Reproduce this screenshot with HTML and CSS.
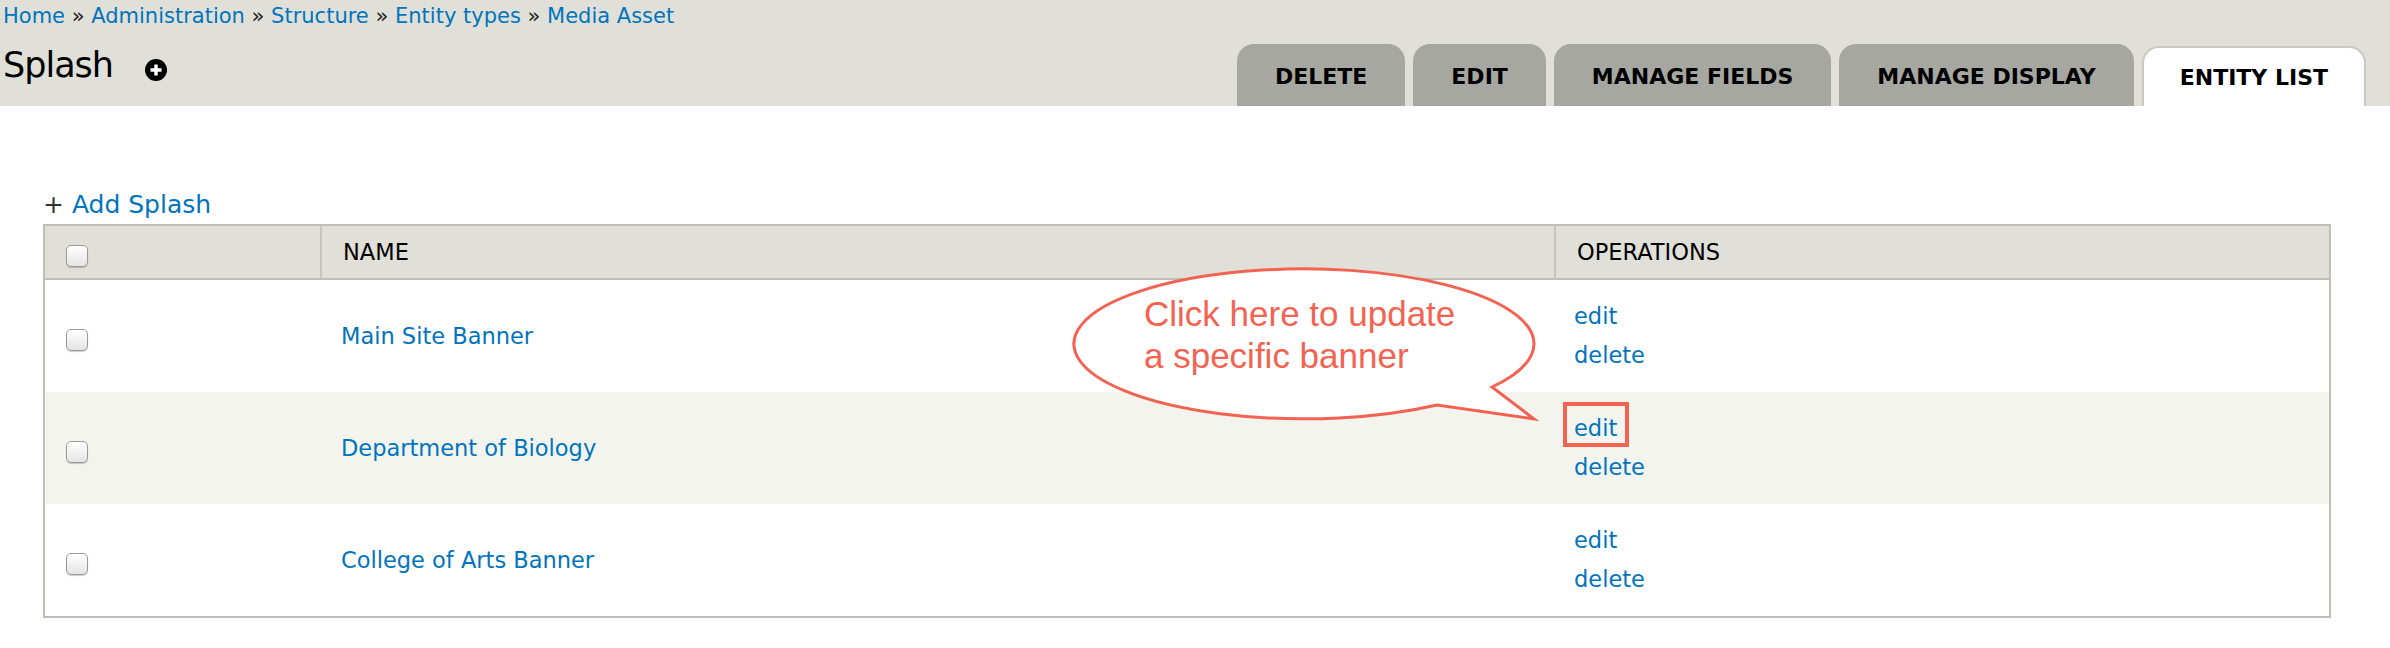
FILE: index.html
```html
<!DOCTYPE html>
<html lang="en">
<head>
<meta charset="utf-8">
<title>Splash</title>
<link rel="stylesheet" href="styles.css">
</head>
<body>
<header class="top">
  <div class="titles">
    <nav class="crumbs"><a href="#">Home</a> » <a href="#">Administration</a> » <a href="#">Structure</a> » <a href="#">Entity types</a> » <a href="#">Media Asset</a></nav>
    <h1 class="page-title"><span>Splash</span><svg class="add-icon" width="22" height="22" viewBox="0 0 22 22"><circle cx="11" cy="11" r="11" fill="#000"/><path d="M11 5.5v11M5.5 11h11" stroke="#fff" stroke-width="3.4"/></svg></h1>
  </div>
  <ul class="tabs">
    <li class="tab">DELETE</li>
    <li class="tab">EDIT</li>
    <li class="tab">MANAGE FIELDS</li>
    <li class="tab">MANAGE DISPLAY</li>
    <li class="tab active">ENTITY LIST</li>
  </ul>
</header>
<main class="content">
  <p class="action"><span class="plus">+</span> <a href="#">Add Splash</a></p>
  <table class="list">
    <colgroup><col class="c-check"><col class="c-name"><col class="c-ops"></colgroup>
    <thead>
      <tr><th><input type="checkbox" class="cb"></th><th>NAME</th><th>OPERATIONS</th></tr>
    </thead>
    <tbody>
      <tr><td><input type="checkbox" class="cb"></td><td><a href="#">Main Site Banner</a></td><td class="ops"><a href="#">edit</a><br><a href="#">delete</a></td></tr>
      <tr class="even"><td><input type="checkbox" class="cb"></td><td><a href="#">Department of Biology</a></td><td class="ops"><span class="hl"><a href="#">edit</a></span><br><a href="#">delete</a></td></tr>
      <tr><td><input type="checkbox" class="cb"></td><td><a href="#">College of Arts Banner</a></td><td class="ops"><a href="#">edit</a><br><a href="#">delete</a></td></tr>
    </tbody>
  </table>
</main>
<div class="callout">
  <svg class="bubble" width="470" height="160" viewBox="0 0 470 160"><path d="M422 123 A230 75 0 1 0 367 141 L464 155 Z" fill="#fff" stroke="#f26352" stroke-width="3" stroke-linejoin="miter"/></svg>
  <div class="callout-text">Click here to update<br>a specific banner</div>
</div>
</body>
</html>
```
FILE: styles.css
```css
html, body {
  margin: 0;
  padding: 0;
  background: #fff;
}
body {
  position: relative;
  font-family: "DejaVu Sans", "Liberation Sans", sans-serif;
  font-size: 22.5px;
  color: #000;
}
a {
  color: #0074bd;
  text-decoration: none;
}
.top {
  display: flex;
  justify-content: space-between;
  align-items: flex-end;
  height: 106px;
  padding-right: 24px;
  background: #e0e0d8;
}
.titles {
  align-self: flex-start;
  padding: 2px 0 0 3px;
}
.crumbs {
  font-size: 21px;
  line-height: 28px;
  color: #222;
  white-space: nowrap;
}
.page-title {
  display: flex;
  align-items: center;
  gap: 32px;
  margin: 15px 0 0;
  font-size: 35px;
  line-height: 40px;
  font-weight: normal;
  letter-spacing: -1px;
}
.add-icon {
  margin-top: 10px;
}
.tabs {
  display: flex;
  align-items: flex-end;
  gap: 8px;
  margin: 0;
  padding: 0;
  list-style: none;
}
.tab {
  box-sizing: border-box;
  height: 62px;
  padding: 4px 38px 0;
  line-height: 58px;
  font-size: 22px;
  font-weight: bold;
  background: #a6a7a1;
  border-radius: 17px 17px 0 0;
  white-space: nowrap;
}
.tab.active {
  height: 60px;
  padding: 2px 36px 0;
  line-height: 56px;
  background: #fff;
  border: 2px solid #c9c9c3;
  border-bottom: 0;
}
.content {
  padding: 0 59px 0 43px;
}
.action {
  margin: 84px 0 4px;
  font-size: 25px;
  line-height: 30px;
}
.plus {
  color: #333;
}
.list {
  width: 100%;
  table-layout: fixed;
  border-collapse: separate;
  border-spacing: 0;
  border: 2px solid #bebfb9;
}
.c-check { width: 277px; }
.c-name { width: 1234px; }
.list th {
  height: 52px;
  padding: 0 0 0 21px;
  text-align: left;
  font-weight: normal;
  background: #e0e0d8;
  border-bottom: 2px solid #bebfb9;
  border-right: 2px solid #c4c5bf;
  vertical-align: middle;
}
.list th:last-child {
  border-right: 0;
}
.list td {
  height: 112px;
  padding: 0 0 0 21px;
  vertical-align: middle;
}
.list td:nth-child(2) {
  padding-left: 19px;
}
.list td.ops {
  padding-left: 18px;
}
.list tr.even td {
  background: #f3f4ee;
}
.ops {
  line-height: 39px;
}
.cb {
  appearance: none;
  -webkit-appearance: none;
  display: block;
  box-sizing: border-box;
  width: 22px;
  height: 22px;
  margin: 8px 0 0;
  border: 1px solid #9a9a9a;
  border-radius: 5px;
  background: linear-gradient(#ffffff, #e4e4e4);
  box-shadow: 0 1px 1px rgba(0,0,0,0.2);
}
.hl {
  position: relative;
  display: inline-block;
}
.hl::after {
  content: "";
  position: absolute;
  left: -11px;
  right: -12px;
  top: -7px;
  bottom: 1px;
  border: 4px solid #f26352;
}
.callout {
  position: absolute;
  left: 1070px;
  top: 264px;
  width: 470px;
  height: 160px;
}
.bubble {
  position: absolute;
  left: 0;
  top: 0;
  overflow: visible;
}
.callout-text {
  position: absolute;
  left: 74px;
  top: 29px;
  font-family: "Liberation Sans", Arial, sans-serif;
  font-size: 35px;
  line-height: 42px;
  color: #f26352;
  white-space: nowrap;
}
```
